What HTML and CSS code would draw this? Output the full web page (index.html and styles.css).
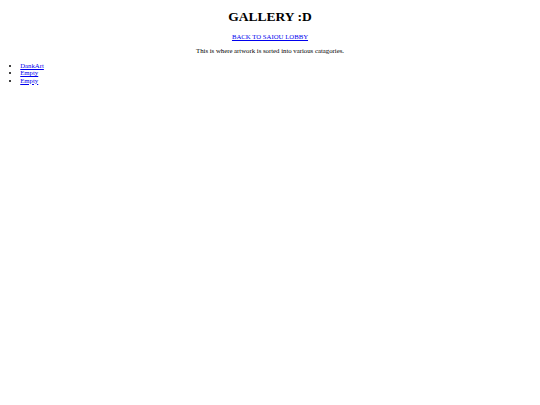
FILE: index.html
```html
<!DOCTYPE html>
<html>
<head>
<meta charset="utf-8">
<title>Gallery</title>
<link rel="stylesheet" href="styles.css">
</head>
<body class="page">
<h1 class="title">GALLERY :D</h1>
<p class="center"><a class="link" href="#">BACK TO SAIOU LOBBY</a></p>
<p class="center">This is where artwork is sorted into various catagories.</p>
<ul class="list">
<li><a class="link" href="#">DankArt</a></li>
<li><a class="link" href="#">Empty</a></li>
<li><a class="link" href="#">Empty</a></li>
</ul>
</body>
</html>
```
FILE: styles.css
```css
.page {
  margin: 3.375px;
  font-family: "Liberation Serif", "Times New Roman", serif;
  font-size: 6.75px;
  line-height: 7.6px;
  color: #000;
  background: #fff;
}
.title {
  font-size: 13.5px;
  line-height: 15.5px;
  text-align: center;
  margin: 6px 0 8px;
}
.center {
  text-align: center;
  margin: 6.75px 0;
}
.link {
  color: #0000ee;
}
.list {
  margin: 6.75px 0;
  padding-left: 16.875px;
}
```
